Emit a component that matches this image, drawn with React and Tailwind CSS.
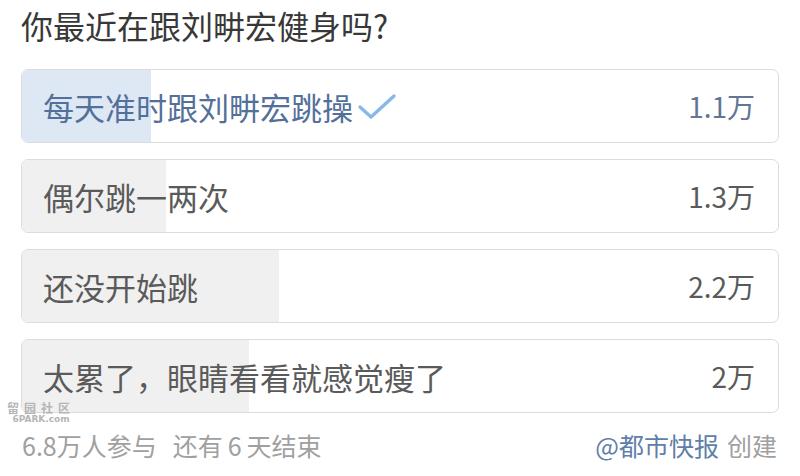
import React from "react";

const options = [
  { text: "每天准时跟刘畊宏跳操", count: "1.1万", fill: 129, selected: true },
  { text: "偶尔跳一两次", count: "1.3万", fill: 144 },
  { text: "还没开始跳", count: "2.2万", fill: 257 },
  { text: "太累了，眼睛看看就感觉瘦了", count: "2万", fill: 227 },
];

function Check() {
  return (
    <svg width="40" height="28" viewBox="0 0 40 28" className="ml-[4px] mt-[2px]">
      <path d="M3 14 L14 24 L37 3" fill="none" stroke="#86b8ea" strokeWidth="3.4" strokeLinecap="round" strokeLinejoin="round" />
    </svg>
  );
}

export default function App() {
  return (
    <div
      className="relative w-[800px] h-[476px] bg-white px-[21px] overflow-hidden"
      style={{ fontFamily: '"Noto Sans CJK SC", "Noto Sans", sans-serif' }}
    >
      <div className="pt-[5px] text-[32px] leading-[40px] text-[#383838]">你最近在跟刘畊宏健身吗?</div>
      <div className="mt-[24px] flex flex-col gap-[16px]">
        {options.map((o, i) => (
          <div
            key={i}
            className="relative h-[74px] rounded-[7px] border border-[#dcdcdc] overflow-hidden flex items-center justify-between pl-[21px] pr-[23px]"
          >
            <div
              className={"absolute left-0 top-0 bottom-0 " + (o.selected ? "bg-[#dde8f4]" : "bg-[#f0f0f0]")}
              style={{ width: o.fill }}
            />
            <div className={"relative flex items-center text-[31px] leading-none " + (o.selected ? "text-[#52709a]" : "text-[#5a5a5a]")}>
              <span>{o.text}</span>
              {o.selected && <Check />}
            </div>
            <div className={"relative text-[28px] leading-none " + (o.selected ? "text-[#637594]" : "text-[#5a5a5a]")}>{o.count}</div>
          </div>
        ))}
      </div>
      <div className="mt-[18px] flex justify-between items-center text-[25px] leading-[28px] pr-[2px]">
        <div className="text-[#a0a0a0] pl-[1px]">
          6.8万人参与<span className="ml-[16px]">还有<span className="mx-[5px]">6</span>天结束</span>
        </div>
        <div>
          <span className="text-[#5f7ea9]">@都市快报</span>
          <span className="text-[#a0a0a0] ml-[8px]">创建</span>
        </div>
      </div>
      <div className="absolute left-[7px] top-[402px] flex flex-col items-center text-[#b5b5b5] leading-none">
        <div className="text-[12px] tracking-[5px] font-bold">留园社区</div>
        <div className="text-[9px] font-bold mt-[1px]" style={{ fontFamily: '"DejaVu Sans", sans-serif' }}>6PARK.com</div>
      </div>
    </div>
  );
}
